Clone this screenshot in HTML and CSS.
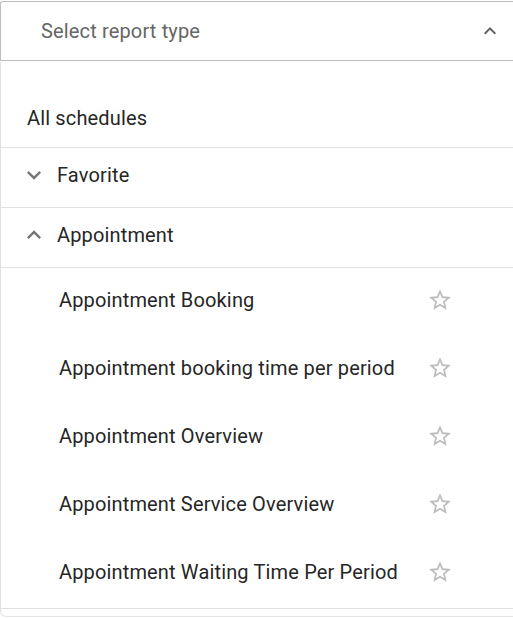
FILE: index.html
```html
<!DOCTYPE html>
<html lang="en">
<head>
    <meta charset="UTF-8">
    <meta name="viewport" content="width=device-width, initial-scale=1.0">
    <title>Reports</title>
    <link rel="stylesheet" href="styles.css">
</head>
<body>
    <!-- Selector -->
    <div class="select-box">
        <span class="select-placeholder">Select report type</span>
        <svg class="select-arrow" viewBox="0 0 24 24"><path d="M7.41 15.41 12 10.83l4.59 4.58L18 14l-6-6-6 6z"/></svg>
    </div>

    <!-- Dropdown panel -->
    <div class="panel">
        <div class="row row-all">All schedules</div>

        <div class="row row-group">
            <svg class="chevron" viewBox="0 0 24 24"><path d="M16.59 8.59 12 13.17 7.41 8.59 6 10l6 6 6-6z"/></svg>
            <span>Favorite</span>
        </div>

        <div class="row row-group">
            <svg class="chevron" viewBox="0 0 24 24"><path d="M7.41 15.41 12 10.83l4.59 4.58L18 14l-6-6-6 6z"/></svg>
            <span>Appointment</span>
        </div>

        <ul class="items">
            <li class="item"><span>Appointment Booking</span><svg class="star" viewBox="0 0 24 24"><path d="M22 9.24l-7.19-.62L12 2 9.19 8.63 2 9.24l5.46 4.73L5.82 21 12 17.27 18.18 21l-1.63-7.03L22 9.24zM12 15.4l-3.76 2.27 1-4.28-3.32-2.88 4.38-.38L12 6.1l1.71 4.04 4.38.38-3.32 2.88 1 4.28L12 15.4z"/></svg></li>
            <li class="item"><span>Appointment booking time per period</span><svg class="star" viewBox="0 0 24 24"><path d="M22 9.24l-7.19-.62L12 2 9.19 8.63 2 9.24l5.46 4.73L5.82 21 12 17.27 18.18 21l-1.63-7.03L22 9.24zM12 15.4l-3.76 2.27 1-4.28-3.32-2.88 4.38-.38L12 6.1l1.71 4.04 4.38.38-3.32 2.88 1 4.28L12 15.4z"/></svg></li>
            <li class="item"><span>Appointment Overview</span><svg class="star" viewBox="0 0 24 24"><path d="M22 9.24l-7.19-.62L12 2 9.19 8.63 2 9.24l5.46 4.73L5.82 21 12 17.27 18.18 21l-1.63-7.03L22 9.24zM12 15.4l-3.76 2.27 1-4.28-3.32-2.88 4.38-.38L12 6.1l1.71 4.04 4.38.38-3.32 2.88 1 4.28L12 15.4z"/></svg></li>
            <li class="item"><span>Appointment Service Overview</span><svg class="star" viewBox="0 0 24 24"><path d="M22 9.24l-7.19-.62L12 2 9.19 8.63 2 9.24l5.46 4.73L5.82 21 12 17.27 18.18 21l-1.63-7.03L22 9.24zM12 15.4l-3.76 2.27 1-4.28-3.32-2.88 4.38-.38L12 6.1l1.71 4.04 4.38.38-3.32 2.88 1 4.28L12 15.4z"/></svg></li>
            <li class="item"><span>Appointment Waiting Time Per Period</span><svg class="star" viewBox="0 0 24 24"><path d="M22 9.24l-7.19-.62L12 2 9.19 8.63 2 9.24l5.46 4.73L5.82 21 12 17.27 18.18 21l-1.63-7.03L22 9.24zM12 15.4l-3.76 2.27 1-4.28-3.32-2.88 4.38-.38L12 6.1l1.71 4.04 4.38.38-3.32 2.88 1 4.28L12 15.4z"/></svg></li>
        </ul>
    </div>
</body>
</html>
```

FILE: styles.css
```css
body {
    font-family: Roboto, "Liberation Sans", sans-serif;
    margin: 0;
    padding-top: 1px;
    background: #fff;
    color: #262626;
    letter-spacing: 0.15px;
    width: 530px;
    overflow: hidden;
}
.select-box {
    height: 60px;
    width: 514px;
    box-sizing: border-box;
    border: 1px solid #bdbdbd;
    border-right: none;
    border-radius: 3px 0 0 0;
    display: flex;
    align-items: center;
    padding: 0 24px 0 40px;
}
.select-placeholder {
    flex: 1;
    font-size: 20px;
    color: #666;
}
.select-arrow {
    width: 24px;
    height: 24px;
    fill: #616161;
    margin-right: -12px;
}
.panel {
    margin-top: 1px;
    width: 530px;
    border-left: 1px solid #e0e0e0;
    border-bottom: 1px solid #e6e6e6;
    border-radius: 0 0 0 6px;
    padding-top: 26px;
    padding-bottom: 7px;
    box-sizing: border-box;
}
.row {
    display: flex;
    align-items: center;
    height: 59px;
    box-sizing: content-box;
    font-size: 20px;
    border-bottom: 1px solid #e0e0e0;
}
.row-all {
    padding-left: 26px;
}
.row-group {
    height: 54px;
    padding: 0 0 5px 19px;
}
.chevron {
    width: 28px;
    height: 28px;
    fill: #757575;
    margin-right: 9px;
}
.items {
    list-style: none;
    margin: 0;
    padding: 0;
    border-bottom: 1px solid #e0e0e0;
}
.item {
    display: flex;
    align-items: center;
    height: 64px;
    padding: 0 0 4px 58px;
    font-size: 20px;
}
.item span {
    width: 368px;
}
.star {
    width: 26px;
    height: 26px;
    fill: #bdbdbd;
}
```
